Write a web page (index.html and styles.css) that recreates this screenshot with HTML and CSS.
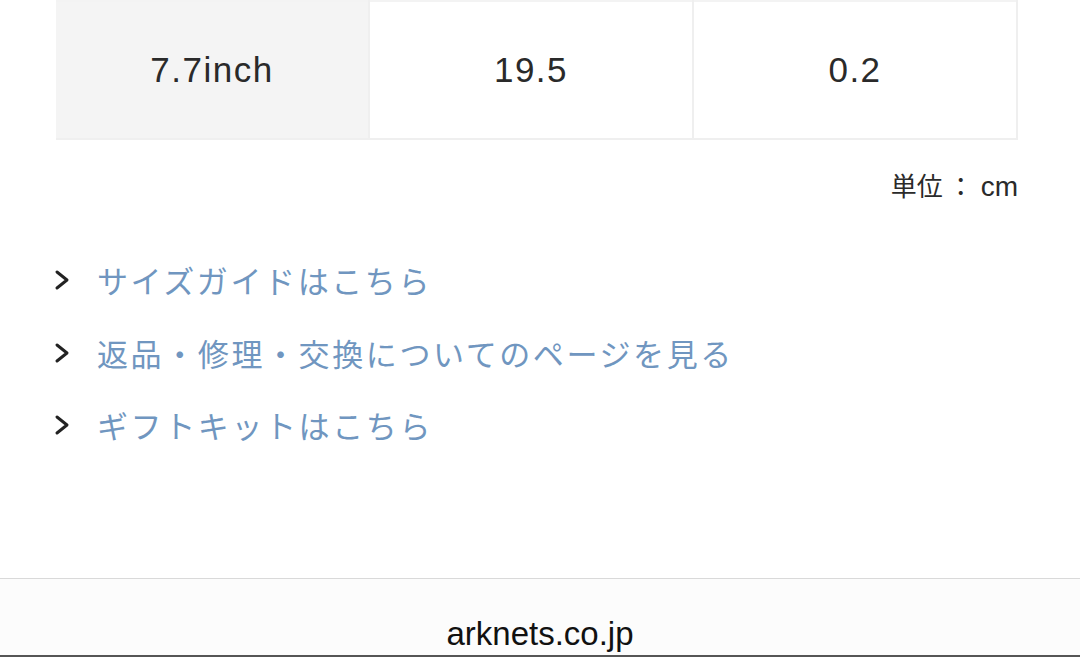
FILE: index.html
```html
<!DOCTYPE html>
<html lang="ja">
<head>
    <meta charset="UTF-8">
    <meta name="viewport" content="width=device-width, initial-scale=1.0">
    <title>サイズ表</title>
    <link rel="stylesheet" href="styles.css">
</head>
<body>
    <div class="size-section">
        <table class="size-table">
            <tbody>
                <tr>
                    <td class="size-label">7.7inch</td>
                    <td>19.5</td>
                    <td>0.2</td>
                </tr>
            </tbody>
        </table>
        <p class="size-unit"><span class="unit-jp">単位<span class="unit-colon">：</span></span>cm</p>
    </div>

    <ul class="link-list">
        <li>
            <svg class="chevron" width="16" height="22" viewBox="0 0 16 22"><polyline points="3,3 13,11 3,19" fill="none" stroke="#222" stroke-width="3" stroke-linecap="round" stroke-linejoin="round"/></svg>
            <a href="#">サイズガイドはこちら</a>
        </li>
        <li>
            <svg class="chevron" width="16" height="22" viewBox="0 0 16 22"><polyline points="3,3 13,11 3,19" fill="none" stroke="#222" stroke-width="3" stroke-linecap="round" stroke-linejoin="round"/></svg>
            <a href="#">返品・修理・交換についてのページを見る</a>
        </li>
        <li>
            <svg class="chevron" width="16" height="22" viewBox="0 0 16 22"><polyline points="3,3 13,11 3,19" fill="none" stroke="#222" stroke-width="3" stroke-linecap="round" stroke-linejoin="round"/></svg>
            <a href="#">ギフトキットはこちら</a>
        </li>
    </ul>

    <div class="url-bar">
        <span class="url-text">arknets.co.jp</span>
    </div>
</body>
</html>
```

FILE: styles.css
```css
body {
    margin: 0;
    background: #fff;
    font-family: "Liberation Sans", "Noto Sans CJK JP", sans-serif;
    color: #222;
    height: 657px;
    display: flex;
    flex-direction: column;
    overflow: hidden;
}
.size-section {
    padding: 0 62px 0 56px;
}
.size-table {
    width: 100%;
    border-collapse: collapse;
    table-layout: fixed;
}
.size-table td {
    height: 136px;
    border: 2px solid #efefef;
    border-top-color: #f3f3f3;
    text-align: center;
    font-size: 35px;
    letter-spacing: 1.5px;
    padding: 0;
    color: #2a2a2a;
}
.size-table td:first-child {
    width: 312px;
    border-left: none;
}
.size-table .size-label {
    background: #f4f4f4;
}
.size-unit {
    margin: 28px 0 0;
    text-align: right;
    font-size: 28px;
    line-height: 34px;
    color: #2a2a2a;
}
.unit-jp {
    font-family: "Noto Sans CJK JP", sans-serif;
    font-size: 26px;
}
.unit-colon {
    margin: 0 7px 0 5px;
}
.link-list {
    list-style: none;
    margin: 40px 0 0;
    padding: 0 0 0 54px;
}
.link-list li {
    display: flex;
    align-items: center;
    height: 72.5px;
}
.chevron {
    flex-shrink: 0;
    margin-right: 27px;
}
.link-list a {
    font-family: "Noto Sans CJK JP", sans-serif;
    font-size: 31px;
    letter-spacing: 2.6px;
    line-height: 40px;
    color: #7096c0;
    text-decoration: none;
}
.url-bar {
    margin-top: auto;
    height: 76px;
    border-top: 1px solid #d9d9d9;
    border-bottom: 2px solid #555;
    background: #fcfcfc;
    display: flex;
    justify-content: center;
    align-items: flex-end;
}
.url-text {
    font-size: 33px;
    line-height: 36px;
    margin-bottom: 3px;
    color: #111;
}
```
